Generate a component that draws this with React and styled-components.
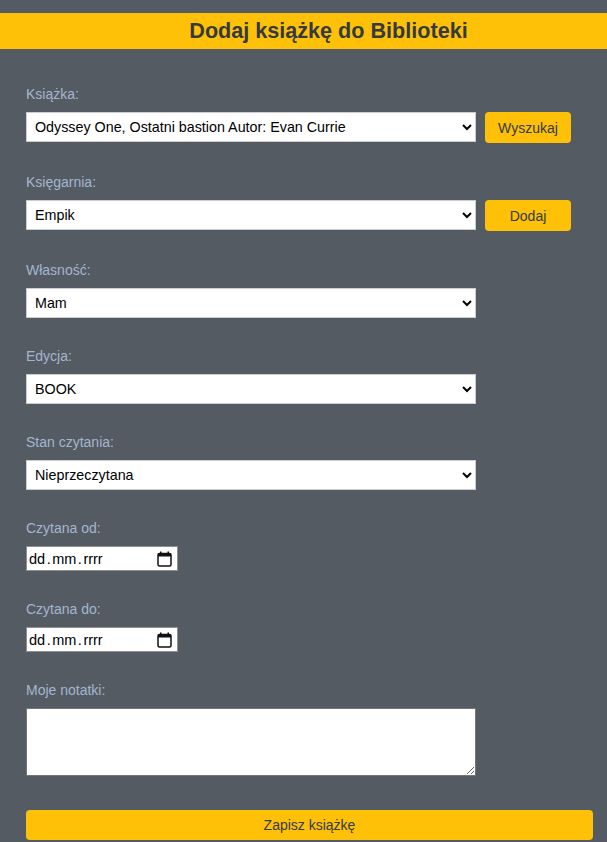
import React from "react";
import styled, { createGlobalStyle } from "styled-components";

const Global = createGlobalStyle`
  html, body { margin: 0; padding: 0; background: #555b63; }
  body { font-family: "Liberation Sans", Arial, sans-serif; }
`;

const Page = styled.div`
  padding-top: 13px;
  min-height: 842px;
  box-sizing: border-box;
`;

const Header = styled.h1`
  margin: 0;
  height: 36px;
  line-height: 36px;
  background: #ffc107;
  color: #343a40;
  font-size: 21.6px;
  font-weight: bold;
  text-align: center;
  padding-left: 50px;
`;

const Form = styled.form`
  padding: 37px 14px 0 26px;
`;

const Field = styled.div`
  margin-bottom: ${(p) => (p.$extra ? "34px" : "30px")};
`;

const Label = styled.label`
  display: block;
  color: #a3b6cf;
  font-size: 14px;
  line-height: 16px;
  margin-bottom: 10px;
`;

const Row = styled.div`
  display: flex;
  align-items: flex-start;
  gap: 9px;
  height: ${(p) => (p.$withButton ? "32px" : "30px")};
`;

const Select = styled.select`
  width: 450px;
  height: 30px;
  box-sizing: border-box;
  border: 1px solid #ccc;
  border-radius: 0;
  background: #fff;
  color: #000;
  font-family: "Liberation Sans", Arial, sans-serif;
  font-size: 14.3px;
  padding: 0 4px;
  margin: 0;
`;

const Button = styled.button`
  width: ${(p) => (p.$full ? "567px" : "86px")};
  height: ${(p) => (p.$full ? "30px" : "31px")};
  border: none;
  border-radius: 4px;
  background: #ffc107;
  color: #343a40;
  font-family: "Liberation Sans", Arial, sans-serif;
  font-size: 14px;
  padding: 0;
  margin: 0;
  cursor: pointer;
`;

const DateBox = styled.div`
  width: 152px;
  height: 25px;
  box-sizing: border-box;
  border: 1px solid #8f8f8f;
  background: #fff;
  display: flex;
  align-items: center;
  justify-content: space-between;
  padding: 0 5px 0 2px;
  font-size: 14.5px;
  color: #000;
`;

const DateText = styled.span`
  display: flex;
  align-items: center;
`;

const Dot = styled.span`
  margin: 0 1.5px;
`;

const Textarea = styled.textarea`
  display: block;
  width: 450px;
  height: 68px;
  box-sizing: border-box;
  border: 1px solid #767676;
  background: #fff;
  margin: 0;
  font-family: "Liberation Sans", Arial, sans-serif;
  font-size: 14px;
`;

const CalendarIcon = () => (
  <svg width="15" height="16" viewBox="0 0 15 16" aria-hidden="true">
    <path d="M3.75 0.5v2.5M11.25 0.5v2.5" stroke="#111" strokeWidth="1.5" fill="none" />
    <rect x="1" y="2.5" width="13" height="12.5" rx="1.5" fill="none" stroke="#111" strokeWidth="1.5" />
    <rect x="1" y="2.5" width="13" height="3" fill="#111" />
  </svg>
);

const DateField = () => (
  <DateBox>
    <DateText>
      dd<Dot>.</Dot>mm<Dot>.</Dot>rrrr
    </DateText>
    <CalendarIcon />
  </DateBox>
);

export default function App() {
  return (
    <Page>
      <Global />
      <Header>Dodaj książkę do Biblioteki</Header>
      <Form onSubmit={(e) => e.preventDefault()}>
        <Field>
          <Label>Książka:</Label>
          <Row $withButton>
            <Select defaultValue="1">
              <option value="1">Odyssey One, Ostatni bastion Autor: Evan Currie</option>
            </Select>
            <Button type="button">Wyszukaj</Button>
          </Row>
        </Field>
        <Field>
          <Label>Księgarnia:</Label>
          <Row $withButton>
            <Select defaultValue="empik">
              <option value="empik">Empik</option>
            </Select>
            <Button type="button">Dodaj</Button>
          </Row>
        </Field>
        <Field>
          <Label>Własność:</Label>
          <Row>
            <Select defaultValue="mam">
              <option value="mam">Mam</option>
            </Select>
          </Row>
        </Field>
        <Field>
          <Label>Edycja:</Label>
          <Row>
            <Select defaultValue="book">
              <option value="book">BOOK</option>
            </Select>
          </Row>
        </Field>
        <Field>
          <Label>Stan czytania:</Label>
          <Row>
            <Select defaultValue="n">
              <option value="n">Nieprzeczytana</option>
            </Select>
          </Row>
        </Field>
        <Field>
          <Label>Czytana od:</Label>
          <DateField />
        </Field>
        <Field>
          <Label>Czytana do:</Label>
          <DateField />
        </Field>
        <Field $extra>
          <Label>Moje notatki:</Label>
          <Textarea />
        </Field>
        <Button type="submit" $full>Zapisz książkę</Button>
      </Form>
    </Page>
  );
}
